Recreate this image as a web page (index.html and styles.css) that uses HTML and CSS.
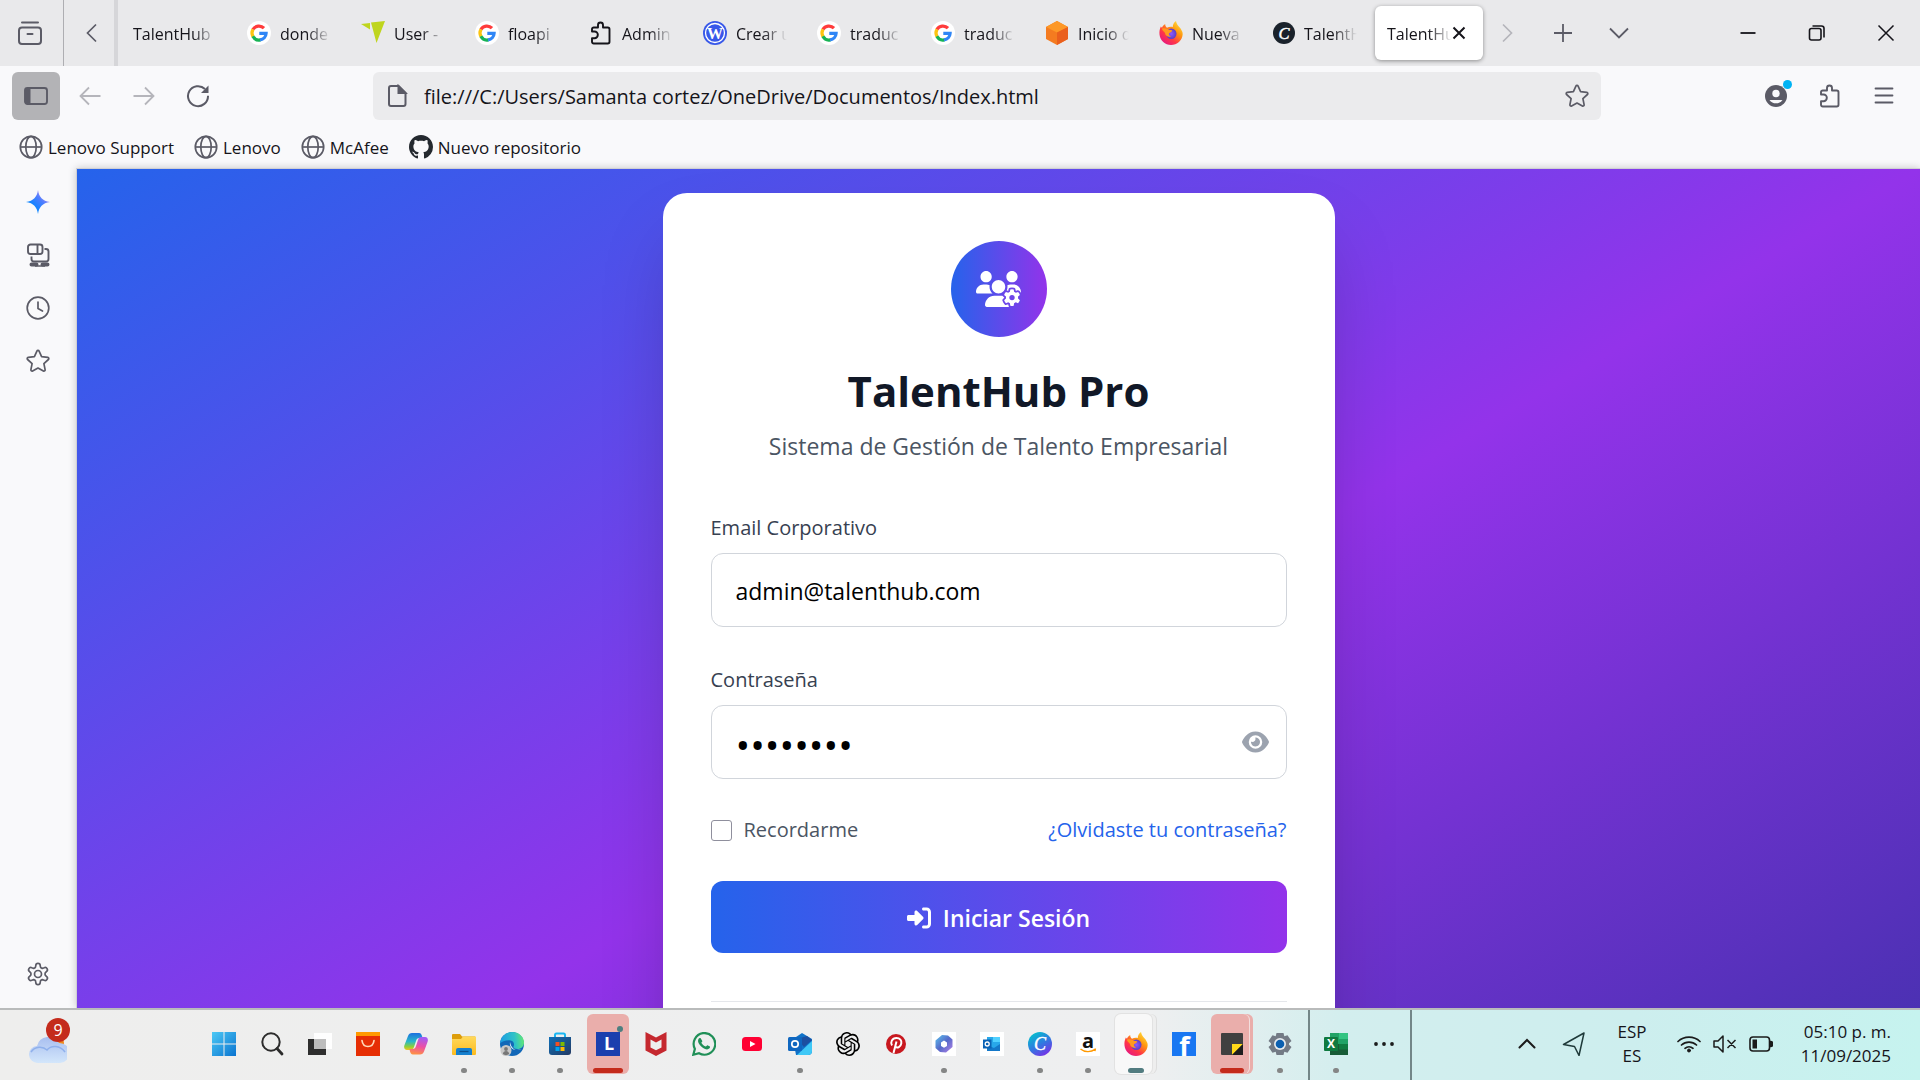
FILE: index.html
```html
<!DOCTYPE html>
<html lang="es">
<head>
<meta charset="utf-8">
<meta name="viewport" content="width=device-width, initial-scale=1">
<title>TalentHub Pro</title>
<link rel="stylesheet" href="styles.css">
</head>
<body>
<svg class="defs" aria-hidden="true">
  <defs>
    <linearGradient id="g-win" x1="0" y1="0" x2="1" y2="1"><stop offset="0" stop-color="#4cc9f5"/><stop offset="1" stop-color="#0a74d0"/></linearGradient>
    <linearGradient id="g-cloud" x1="0" y1="0" x2="0" y2="1"><stop offset="0" stop-color="#a9bff0"/><stop offset="1" stop-color="#d3e6fb"/></linearGradient>
    <linearGradient id="g-fox" x1="1" y1="0" x2="0.2" y2="1"><stop offset="0" stop-color="#fff44f"/><stop offset="0.4" stop-color="#ff980e"/><stop offset="0.7" stop-color="#ff3647"/><stop offset="1" stop-color="#e31587"/></linearGradient>
    <radialGradient id="g-foxcore"><stop offset="0" stop-color="#9059ff"/><stop offset="1" stop-color="#5b3fc4"/></radialGradient>
    <linearGradient id="g-canva" x1="0.2" y1="0" x2="0.8" y2="1"><stop offset="0" stop-color="#00c4cc"/><stop offset="0.5" stop-color="#2f7be0"/><stop offset="1" stop-color="#7d2ae8"/></linearGradient>
    <linearGradient id="g-edge" x1="0" y1="0.3" x2="1" y2="0.2"><stop offset="0" stop-color="#1b9de2"/><stop offset="0.6" stop-color="#2fc2c7"/><stop offset="1" stop-color="#66eb6e"/></linearGradient>
    <linearGradient id="g-spark" x1="0" y1="1" x2="1" y2="0"><stop offset="0.3" stop-color="#0a84ff"/><stop offset="0.6" stop-color="#4f7dff"/><stop offset="1" stop-color="#ff9ee0"/></linearGradient>
    <linearGradient id="g-cop1" x1="0" y1="0" x2="0" y2="1"><stop offset="0" stop-color="#1b6fe0"/><stop offset="0.5" stop-color="#29b8c8"/><stop offset="0.8" stop-color="#8ccf3a"/><stop offset="1" stop-color="#f3c421"/></linearGradient>
    <linearGradient id="g-cop2" x1="0.5" y1="0" x2="0.3" y2="1"><stop offset="0" stop-color="#a45cf4"/><stop offset="0.5" stop-color="#ec4fa6"/><stop offset="1" stop-color="#ff9340"/></linearGradient>
    <linearGradient id="g-store" x1="0" y1="0" x2="1" y2="1"><stop offset="0" stop-color="#0f6fb8"/><stop offset="1" stop-color="#243a63"/></linearGradient>
    <linearGradient id="g-folder" x1="0" y1="0" x2="0" y2="1"><stop offset="0" stop-color="#ffd95c"/><stop offset="1" stop-color="#fcbb1f"/></linearGradient>
    <linearGradient id="g-365" x1="0" y1="0" x2="1" y2="1"><stop offset="0" stop-color="#5cc3ee"/><stop offset="0.5" stop-color="#5569c9"/><stop offset="1" stop-color="#b583e8"/></linearGradient>
  </defs>
  <symbol id="i-google" viewBox="0 0 24 24">
    <circle cx="12" cy="12" r="12" fill="#fff"/>
    <g fill="none" stroke-width="3.2">
      <path d="M17 7.2A7 7 0 0 0 5.9 8.5" stroke="#ff3b3b"/>
      <path d="M6 8.4a7.2 7.2 0 0 0 0 7.2" stroke="#fcc411"/>
      <path d="M5.9 15.3A7 7 0 0 0 13.5 18.9" stroke="#17b355"/>
      <path d="M12.3 12.300h6.8a7 7 0 0 1-6 6.600" stroke="#2f86f6"/>
    </g>
  </symbol>
  <symbol id="i-ylogo" viewBox="0 0 24 24"><path d="M10 1.500 24 0 15.500 22zM0 3l9-1v6.500z" fill="#bfd51e"/></symbol>
  <symbol id="i-puzzle" viewBox="0 0 24 24"><path d="M3 10.500V8.200A1.700 1.700 0 0 1 4.700 6.500H9V4a2.500 2.500 0 0 1 5 0v2.500h4.800a1.700 1.700 0 0 1 1.700 1.700v12.600a1.700 1.700 0 0 1-1.700 1.700H4.700A1.700 1.700 0 0 1 3 20.800v-3.600h2.500a2.500 2.500 0 0 0 0-6.700z" fill="none" stroke="currentColor" stroke-width="1.900" stroke-linejoin="round"/></symbol>
  <symbol id="i-box" viewBox="0 0 24 24"><path d="M12 0l11 6v12l-11 6L1 18V6z" fill="#f47b20"/><path d="M12 0l11 6-11 5.500L1 6z" fill="#fd9827"/><path d="M23 6v12l-11 6V11.500z" fill="#ea5f1d"/></symbol>
  <symbol id="i-fox" viewBox="0 0 24 24">
    <path d="M22.500 9.200c-.5-1.500-1.600-2.800-2.500-3.500C18.500 4.400 17.500 2.500 17 0c-2.200 1.500-3.300 4-3.200 6-2-.3-4-.2-5.800.8C6.800 5.800 6 4.500 6.200 3 4.300 4.200 3.500 5.500 3 6.800L1.800 5.500C.7 8 .2 10.500.5 13.500 1.200 19.500 6 24 12 24s11.500-4.500 11.700-11c0-1.500-.4-2.800-1.200-3.800z" fill="url(#g-fox)"/>
    <circle cx="12.300" cy="12.800" r="5.200" fill="url(#g-foxcore)"/>
    <path d="M3 7.500c3-.8 5.500.2 7 1.200 1.500.2 2.800.3 3.300 1-.4 1.400-2.300 1.700-3.300 2.600-.5 1.300.3 2.700 2 3-2 1.200-4.800.3-5.700-2C6.500 11 3 10 3 7.500z" fill="#ff9a1f"/>
  </symbol>
  <symbol id="i-globe" viewBox="0 0 24 24"><g fill="none" stroke="currentColor" stroke-width="1.700"><circle cx="12" cy="12" r="10.700"/><ellipse cx="12" cy="12" rx="5.200" ry="10.700"/><path d="M1.500 12h21"/></g></symbol>
  <symbol id="i-github" viewBox="0 0 16 16"><path fill="#24292f" d="M8 0C3.580 0 0 3.580 0 8c0 3.540 2.290 6.530 5.470 7.590.4.070.55-.17.55-.38 0-.19-.01-.82-.01-1.490-2.010.37-2.530-.49-2.690-.94-.09-.23-.48-.94-.82-1.130-.28-.15-.68-.52-.01-.53.63-.01 1.080.58 1.230.82.72 1.210 1.870.87 2.330.66.070-.52.28-.87.51-1.070-1.780-.2-3.640-.89-3.640-3.950 0-.87.31-1.590.82-2.150-.08-.2-.36-1.020.08-2.120 0 0 .67-.21 2.200.82.640-.18 1.320-.27 2-.27s1.360.09 2 .27c1.530-1.040 2.200-.82 2.200-.82.440 1.100.16 1.920.08 2.120.51.56.82 1.270.82 2.150 0 3.070-1.870 3.750-3.650 3.950.29.25.54.73.54 1.480 0 1.070-.01 1.930-.01 2.200 0 .21.15.46.55.38A8.010 8.010 0 0 0 16 8c0-4.420-3.580-8-8-8z"/></symbol>
  <symbol id="i-star" viewBox="0 0 24 24"><path d="M10.900 2.100a1.200 1.200 0 0 1 2.200 0l2.500 5.600 6.200.7a1.200 1.200 0 0 1 .6 2.100l-4.500 4.100 1.200 6.100a1.200 1.200 0 0 1-1.700 1.300L12 19l-5.400 3a1.200 1.200 0 0 1-1.700-1.300l1.200-6.100-4.500-4.100a1.200 1.200 0 0 1 .6-2.100l6.200-.7z" fill="none" stroke="currentColor" stroke-width="1.700" stroke-linejoin="round"/></symbol>
  <symbol id="i-gear" viewBox="0 0 24 24"><path d="M9.800 3a2.200 2.200 0 0 1 4.400 0l.4 1.800 1.700 1 1.900-.6a2.200 2.200 0 0 1 2.200 3.800l-1.300 1.400v2l1.300 1.400a2.200 2.200 0 0 1-2.200 3.800l-1.900-.6-1.700 1-.4 1.800a2.200 2.200 0 0 1-4.400 0l-.4-1.800-1.700-1-1.900.6a2.200 2.200 0 0 1-2.200-3.800l1.300-1.400v-2L3.600 9a2.200 2.200 0 0 1 2.200-3.800l1.900.6 1.700-1z" transform="translate(0 .6)" fill="none" stroke="currentColor" stroke-width="1.700" stroke-linejoin="round"/><circle cx="12" cy="12" r="3.500" fill="none" stroke="currentColor" stroke-width="1.700"/></symbol>
</svg>

<div class="screen">
  <header class="tabs-bar">
    <button class="fx-view" aria-label="Vista de Firefox"><svg class="ic24" viewBox="0 0 24 24" fill="none" stroke="currentColor" stroke-width="2" stroke-linecap="round"><rect x="1" y="6.500" width="22" height="16.500" rx="3"/><path d="M4 1.500h16M9.500 13h5"/></svg></button>
    <button class="scroll-left" aria-label="Anterior"><svg class="ic24" viewBox="0 0 24 24" fill="none" stroke="currentColor" stroke-width="1.700"><path d="M16 3.500 7.500 12l8.500 8.500"/></svg></button>
    <nav class="tabs">
      <a class="tab" href="#"><span class="tab-text">TalentHub</span></a>
      <a class="tab" href="#"><svg class="ic24"><use href="#i-google"/></svg><span class="tab-text">donde</span></a>
      <a class="tab" href="#"><svg class="ic24"><use href="#i-ylogo"/></svg><span class="tab-text">User -</span></a>
      <a class="tab" href="#"><svg class="ic24"><use href="#i-google"/></svg><span class="tab-text">floapi</span></a>
      <a class="tab" href="#"><svg class="ic24"><use href="#i-puzzle"/></svg><span class="tab-text">Admin</span></a>
      <a class="tab" href="#"><svg class="ic24" viewBox="0 0 24 24"><circle cx="12" cy="12" r="12" fill="#3858e9"/><circle cx="12" cy="12" r="9.500" fill="none" stroke="#fff" stroke-width="1.300"/><text x="12" y="17.500" text-anchor="middle" font-family="Liberation Serif, serif" font-weight="700" font-size="16" fill="#fff">W</text></svg><span class="tab-text">Crear u</span></a>
      <a class="tab" href="#"><svg class="ic24"><use href="#i-google"/></svg><span class="tab-text">traduc</span></a>
      <a class="tab" href="#"><svg class="ic24"><use href="#i-google"/></svg><span class="tab-text">traduc</span></a>
      <a class="tab" href="#"><svg class="ic24"><use href="#i-box"/></svg><span class="tab-text">Inicio d</span></a>
      <a class="tab" href="#"><svg class="ic24"><use href="#i-fox"/></svg><span class="tab-text">Nueva</span></a>
      <a class="tab" href="#"><svg class="ic22" viewBox="0 0 24 24"><circle cx="12" cy="12" r="12" fill="#1a222b"/><text x="12" y="18" text-anchor="middle" font-family="Liberation Serif, serif" font-style="italic" font-size="18" fill="#fff" stroke="#fff" stroke-width=".5">C</text></svg><span class="tab-text">TalentH</span></a>
      <a class="tab tab-active" href="#"><span class="tab-text">TalentHub</span><svg class="ic14" viewBox="0 0 14 14" stroke="#15141a" stroke-width="2"><path d="M1.500 1.500l11 11M12.500 1.500l-11 11"/></svg></a>
    </nav>
    <div class="tab-tools">
      <button class="dim" aria-label="Siguiente"><svg class="ic24" viewBox="0 0 24 24" fill="none" stroke="currentColor" stroke-width="1.700"><path d="M8 3.500l8.500 8.500L8 20.500"/></svg></button>
      <button aria-label="Nueva pestaña"><svg class="ic24" viewBox="0 0 24 24" fill="none" stroke="currentColor" stroke-width="1.800"><path d="M12 3v18M3 12h18"/></svg></button>
      <button aria-label="Lista de pestañas"><svg class="ic24" viewBox="0 0 24 24" fill="none" stroke="currentColor" stroke-width="1.800"><path d="M3 7.500l9 9 9-9"/></svg></button>
    </div>
    <div class="window-tools">
      <button aria-label="Minimizar"><svg class="ic24" viewBox="0 0 24 24" stroke="currentColor" stroke-width="1.800"><path d="M4.500 12h15"/></svg></button>
      <button aria-label="Restaurar"><svg class="ic24" viewBox="0 0 24 24" fill="none" stroke="currentColor" stroke-width="1.600"><rect x="4.500" y="7.500" width="11.500" height="11.500" rx="2"/><path d="M7.500 5h9a2.500 2.500 0 0 1 2.500 2.500v9"/></svg></button>
      <button aria-label="Cerrar"><svg class="ic24" viewBox="0 0 24 24" stroke="currentColor" stroke-width="1.500"><path d="M4.500 4.500l15 15M19.500 4.500l-15 15"/></svg></button>
    </div>
  </header>

  <div class="toolbar">
    <div class="nav-tools">
      <button class="pressed" aria-label="Barra lateral"><svg class="ic24" viewBox="0 0 24 24"><rect x="1" y="4" width="22" height="16" rx="2.500" fill="none" stroke="currentColor" stroke-width="1.900"/><path d="M1 5h5.500v14H1z" fill="currentColor"/></svg></button>
      <button class="dim" aria-label="Atrás"><svg class="ic24" viewBox="0 0 24 24" fill="none" stroke="currentColor" stroke-width="1.800"><path d="M22.500 12H2.500M11 3.500 2.500 12l8.500 8.500"/></svg></button>
      <button class="dim" aria-label="Adelante"><svg class="ic24" viewBox="0 0 24 24" fill="none" stroke="currentColor" stroke-width="1.800"><path d="M1.500 12h20M13 3.500l8.500 8.500-8.500 8.500"/></svg></button>
      <button aria-label="Recargar"><svg class="ic24" viewBox="0 0 24 24" fill="none" stroke="currentColor" stroke-width="2"><path d="M22 11.800A10 10 0 1 1 19 5"/><path d="M22.500 1.500v7.500H15z" fill="currentColor" stroke="none"/></svg></button>
    </div>
    <div class="urlbar">
      <svg class="ic24" viewBox="0 0 24 24" fill="none" stroke="currentColor" stroke-width="2"><path d="M6 2h7.500L20.500 9v11a2 2 0 0 1-2 2H6a2 2 0 0 1-2-2V4a2 2 0 0 1 2-2z"/><path d="M13.500 2v7h7z" fill="currentColor"/></svg>
      <input class="url" type="text" aria-label="Dirección" value="file:///C:/Users/Samanta cortez/OneDrive/Documentos/Index.html">
      <button aria-label="Añadir marcador"><svg class="ic24"><use href="#i-star"/></svg></button>
    </div>
    <div class="right-tools">
      <button class="account" aria-label="Cuenta"><svg class="ic24" viewBox="0 0 24 24"><circle cx="12" cy="12" r="11" fill="currentColor"/><circle cx="12" cy="9.500" r="3.700" fill="#f9f9fb"/><path d="M5.500 16h13a8 8 0 0 1-13 0z" fill="#f9f9fb"/></svg><span class="account-dot"></span></button>
      <button aria-label="Extensiones"><svg class="ic24"><use href="#i-puzzle"/></svg></button>
      <button aria-label="Menú"><svg class="ic24" viewBox="0 0 24 24" stroke="currentColor" stroke-width="1.800" stroke-linecap="round"><path d="M3.500 4.500h17M3.500 11.500h17M3.500 18.500h17"/></svg></button>
    </div>
  </div>

  <nav class="bookmarks">
    <a href="#"><svg class="ic24"><use href="#i-globe"/></svg>Lenovo Support</a>
    <a href="#"><svg class="ic24"><use href="#i-globe"/></svg>Lenovo</a>
    <a href="#"><svg class="ic24"><use href="#i-globe"/></svg>McAfee</a>
    <a href="#"><svg class="ic24"><use href="#i-github"/></svg>Nuevo repositorio</a>
  </nav>

  <div class="content">
    <aside class="sidebar">
      <button aria-label="Chatbot"><svg class="ic24" viewBox="0 0 24 24"><path d="M12 0c1 7 4.500 11 12 12-7.500 1-11 5-12 12-1-7-4.500-11-12-12 7.500-1 11-5 12-12z" fill="url(#g-spark)"/></svg></button>
      <button aria-label="Pestañas de otros dispositivos"><svg class="ic24" viewBox="0 0 24 24" fill="none" stroke="currentColor" stroke-width="1.900"><rect x="2" y="1.500" width="14.500" height="9.500" rx="2.500"/><path d="M11.500 2v9M18.500 6H20a2.500 2.500 0 0 1 2.500 2.500V16a2.500 2.500 0 0 1-2.500 2.500H8A2.500 2.500 0 0 1 5.500 16v-2.500"/><path d="M5.500 21.500h5M16.500 21.500h5" stroke-width="4" stroke-linecap="round"/><path d="M9 23h10" stroke-width="1.500"/></svg></button>
      <button aria-label="Historial"><svg class="ic24" viewBox="0 0 24 24" fill="none" stroke="currentColor" stroke-width="1.700" stroke-linecap="round"><circle cx="12" cy="12" r="10.800"/><path d="M12 6v6.500l4.500 2.500"/></svg></button>
      <button aria-label="Marcadores"><svg class="ic24"><use href="#i-star"/></svg></button>
      <button class="settings" aria-label="Configuración"><svg class="ic24"><use href="#i-gear"/></svg></button>
    </aside>
    <main class="viewport">
      <div class="page">
        <form class="card">
          <div class="brand">
            <svg viewBox="0 0 640 512" fill="#fff"><path d="M144 160c-44.200 0-80-35.800-80-80S99.800 0 144 0s80 35.800 80 80s-35.800 80-80 80zm368 0c-44.200 0-80-35.800-80-80s35.800-80 80-80s80 35.800 80 80s-35.800 80-80 80zM0 298.700C0 239.800 47.800 192 106.700 192h42.700c15.900 0 31 3.500 44.600 9.700c-1.300 7.200-1.900 14.700-1.900 22.300c0 38.200 16.800 72.500 43.300 96H21.300C9.600 320 0 310.400 0 298.700zM405.300 320c26.600-23.500 42.700-57.800 42.700-96c0-7.600-.7-15-1.900-22.300c13.600-6.300 28.700-9.700 44.600-9.700h42.700C592.200 192 640 239.800 640 298.700c0 11.800-9.600 21.300-21.300 21.300zM416 224c0 53-43 96-96 96s-96-43-96-96s43-96 96-96s96 43 96 96zM128 485.300C128 411.700 187.700 352 261.300 352H378.700C452.300 352 512 411.700 512 485.300c0 14.700-11.900 26.700-26.700 26.700H154.700c-14.700 0-26.700-11.900-26.700-26.700z"/><path stroke="#6d45e9" stroke-width="50" paint-order="stroke" stroke-linejoin="round" d="M488 262q24-6 48 0l6 34 24 14 32-12q18 18 26 42l-26 24v28l26 24q-8 24-26 42l-32-12-24 14-6 34q-24 6-48 0l-6-34-24-14-32 12q-18-18-26-42l26-24v-28l-26-24q8-24 26-42l32 12 24-14z"/><circle cx="512" cy="378" r="38" fill="#6d45e9"/></svg>
          </div>
          <h1>TalentHub Pro</h1>
          <p class="subtitle">Sistema de Gestión de Talento Empresarial</p>
          <div class="field">
            <label for="email">Email Corporativo</label>
            <input class="box" id="email" type="email" value="admin@talenthub.com">
          </div>
          <div class="field">
            <label for="password">Contraseña</label>
            <div class="password-wrap">
              <input class="box password" id="password" type="password" value="12345678">
              <button class="eye" type="button" aria-label="Mostrar contraseña"><svg viewBox="0 0 576 512" fill="currentColor"><path d="M288 32c-80.800 0-145.500 36.800-192.600 80.600C48.600 156 17.300 208 2.500 243.700c-3.300 7.900-3.300 16.700 0 24.600C17.300 304 48.600 356 95.400 399.400C142.500 443.200 207.200 480 288 480s145.500-36.800 192.600-80.600c46.800-43.500 78.100-95.400 93-131.100c3.300-7.900 3.300-16.700 0-24.600c-14.900-35.700-46.200-87.700-93-131.100C433.500 68.800 368.800 32 288 32zM144 256a144 144 0 1 1 288 0 144 144 0 1 1 -288 0zm144-64c0 35.300-28.700 64-64 64c-7.100 0-13.900-1.200-20.300-3.300c-5.500-1.800-11.900 1.600-11.700 7.400c.3 6.900 1.300 13.800 3.200 20.700c13.700 51.200 66.400 81.600 117.600 67.900s81.600-66.400 67.900-117.600c-11.100-41.500-47.800-69.400-88.600-71.100c-5.800-.2-9.200 6.100-7.400 11.700c2.100 6.400 3.300 13.200 3.300 20.300z"/></svg></button>
            </div>
          </div>
          <div class="options">
            <label class="remember"><input type="checkbox">Recordarme</label>
            <a href="#">¿Olvidaste tu contraseña?</a>
          </div>
          <button class="submit" type="submit"><svg class="ic24" viewBox="0 0 512 512" fill="currentColor"><path d="M217.900 105.900L340.700 228.700c7.200 7.200 11.300 17.100 11.300 27.300s-4.100 20.100-11.300 27.300L217.900 406.100c-6.400 6.400-15 9.900-24 9.900c-18.700 0-33.900-15.200-33.900-33.900l0-62.100L32 320c-17.700 0-32-14.300-32-32l0-64c0-17.700 14.300-32 32-32l128 0 0-62.100c0-18.700 15.200-33.900 33.900-33.900c9 0 17.600 3.600 24 9.900zM352 416l64 0c17.700 0 32-14.300 32-32l0-256c0-17.700-14.300-32-32-32l-64 0c-17.700 0-32-14.300-32-32s14.300-32 32-32l64 0c53 0 96 43 96 96l0 256c0 53-43 96-96 96l-64 0c-17.700 0-32-14.300-32-32s14.300-32 32-32z"/></svg>Iniciar Sesión</button>
          <hr>
        </form>
      </div>
    </main>
  </div>

  <footer class="taskbar">
    <button class="weather" aria-label="El tiempo"><svg viewBox="0 0 38 38"><circle cx="27" cy="17" r="8" fill="#f08a1c"/><path d="M9 37a8.500 8.500 0 0 1-1-17 12 12 0 0 1 22-3 10 10 0 0 1 1 20z" fill="url(#g-cloud)"/><path d="M2 26c4-6 12-6 16-2 4-5 13-5 18 2" fill="none" stroke="#8fb0ec" stroke-width="1.500"/></svg><span class="badge">9</span></button>
    <div class="apps">
      <button class="app" aria-label="Inicio"><svg class="ic24" viewBox="0 0 24 24" fill="url(#g-win)"><path d="M0 0h11.500v11.500H0zM12.500 0H24v11.500H12.500zM0 12.500h11.500V24H0zM12.500 12.500H24V24H12.500z"/></svg></button>
      <button class="app" aria-label="Buscar"><svg class="ic24" viewBox="0 0 24 24" fill="none" stroke="#2c2c2c"><circle cx="11" cy="10" r="8.700" stroke-width="2"/><path d="M17 16.500l5 5.500" stroke-width="2.800" stroke-linecap="round"/></svg></button>
      <button class="app" aria-label="Vista de tareas"><svg class="ic24" viewBox="0 0 24 24"><path d="M0 7h18v16H0z" fill="#2e2e2e"/><path d="M6 1h18v16H6z" fill="#fff" opacity=".9"/><path d="M6 7h12v10H6z" fill="#bdbdbd"/></svg></button>
      <button class="app" aria-label="AliExpress"><svg class="ic24" viewBox="0 0 24 24"><path d="M0 0h24v24H0z" fill="#e62e04"/><path d="M0 0h24v4H0z" fill="#ff9900"/><path d="M6 8.500c1 8 11 8 12 0" fill="none" stroke="#ffd9b8" stroke-width="1.700" stroke-linecap="round"/></svg></button>
      <button class="app" aria-label="Copilot"><svg class="ic24" viewBox="0 0 24 24"><path d="M8 1h7c2 0 2.500 1.500 3 3l.5 2h-3c-2 0-3 1-3.500 3l-2 6c-.6 2-1.500 3-3.500 3H3c-2.500 0-3.500-2-2.500-5L4 4c.7-2 2-3 4-3z" fill="url(#g-cop1)"/><path d="M16 22.500H9c-2 0-2.500-1.500-3-3L5.500 17h3c2 0 3-1 3.500-3l2-6c.6-2 1.500-3 3.500-3H21c2.500 0 3.500 2 2.500 5L20 19.500c-.7 2-2 3-4 3z" fill="url(#g-cop2)"/></svg></button>
      <button class="app running" aria-label="Explorador de archivos"><svg class="ic24" viewBox="0 0 24 24"><path d="M0 3a1 1 0 0 1 1-1h7l2 2.500h13V10H0z" fill="#dd9d0b"/><path d="M0 7h9l2-2.500h13V22a1 1 0 0 1-1 1H1a1 1 0 0 1-1-1z" fill="url(#g-folder)"/><path d="M4 23v-5a2 2 0 0 1 2-2h12a2 2 0 0 1 2 2v5z" fill="#1580cf"/><path d="M7.500 19.500h9" stroke="#0b4f8e" stroke-width="1.300"/></svg></button>
      <button class="app running" aria-label="Edge"><svg class="ic24" viewBox="0 0 24 24"><circle cx="12" cy="12" r="12" fill="#1268b8"/><path d="M0 11.500C.5 5 5.500 0 12 0c7 0 12 5 12 10.500 0 4-3 6.500-6.500 6.500-3 0-4.500-1-4-2.500 1.500-2.500 0-6-4-6.200C5 8.200 1.500 10 0 11.500z" fill="url(#g-edge)"/><path d="M10 10c-1 6 4 10 12 7-2.500 1.300-10 3-12-7z" fill="#e8f4fb"/><circle cx="6" cy="18.500" r="5.500" fill="#c8c8c8"/><circle cx="6" cy="17" r="1.900" fill="#777"/><path d="M2.800 22c.5-4 6-4 6.400 0a5.500 5.500 0 0 1-6.400 0z" fill="#777"/></svg></button>
      <button class="app running" aria-label="Microsoft Store"><svg class="ic24" viewBox="0 0 24 24"><path d="M7 6V3a1.500 1.500 0 0 1 1.500-1.500h7A1.500 1.500 0 0 1 17 3v3" fill="none" stroke="#18b6f2" stroke-width="2"/><path d="M1 5h22v15a3 3 0 0 1-3 3H4a3 3 0 0 1-3-3z" fill="url(#g-store)"/><path d="M7.500 10h4v4h-4z" fill="#f25022"/><path d="M12.500 10h4v4h-4z" fill="#7fba00"/><path d="M7.500 15h4v4h-4z" fill="#00a4ef"/><path d="M12.500 15h4v4h-4z" fill="#ffb900"/></svg></button>
      <button class="app alert" aria-label="Lenovo Vantage"><svg class="ic24" viewBox="0 0 24 24"><path d="M0 0h24v24H0z" fill="#1b3fae"/><text x="13" y="18" text-anchor="middle" font-family="Open Sans, sans-serif" font-weight="700" font-size="18" fill="#fff">L</text></svg><span class="app-dot"></span></button>
      <button class="app" aria-label="McAfee"><svg class="ic24" viewBox="0 0 24 24"><path d="M1.500 0L12 5.500 22.500 0v18.500L12 24 1.500 18.500zM6.500 7.500v8L12 18.300l5.500-2.800v-8L12 10.500z" fill="#c5282f" fill-rule="evenodd"/></svg></button>
      <button class="app" aria-label="WhatsApp"><svg class="ic24" viewBox="0 0 24 24"><path d="M1.300 22.700l1.600-5.800A10.800 10.800 0 1 1 7 21.200z" fill="none" stroke="#1f8f57" stroke-width="2.200"/><path d="M8.800 6.500c-.5-.9-1.800-.5-2.300.4-1.300 2.400.5 5.600 3.300 8 2.700 2.300 5.700 3.300 7.400 1.700.8-.7 1-1.800.7-2.100l-2.400-1.200c-.7-.2-1 1.300-1.800 1.300-1.500-.3-4-2.600-4.300-3.900.1-.6 1.100-1 .9-1.700z" fill="#1f8f57"/></svg></button>
      <button class="app" aria-label="YouTube"><svg class="ic24" viewBox="0 0 24 24"><rect x="2" y="5" width="20" height="14" rx="3.500" fill="#ff0033"/><path d="M10 9l5.500 3-5.500 3z" fill="#fff"/></svg></button>
      <button class="app running" aria-label="Outlook"><svg class="ic24" viewBox="0 0 24 24"><path d="M5 7L14 1l10 6v12a4 4 0 0 1-4 4H8z" fill="#1072c8"/><path d="M9 7l10-3 5 4-8 7z" fill="#1c4fa0"/><path d="M24 9v10a4 4 0 0 1-4 4H9z" fill="#3fc8f6"/><rect y="5" width="14" height="14" rx="1.500" fill="#0f67c0"/><circle cx="7" cy="12" r="3.200" fill="none" stroke="#fff" stroke-width="1.700"/></svg></button>
      <button class="app" aria-label="ChatGPT"><svg class="ic24" viewBox="0 0 24 24"><path d="M22.282 9.821a5.985 5.985 0 0 0-.516-4.911 6.046 6.046 0 0 0-6.510-2.900A6.065 6.065 0 0 0 4.981 4.182a5.985 5.985 0 0 0-3.998 2.900 6.046 6.046 0 0 0 .743 7.097 5.980 5.980 0 0 0 .511 4.911 6.051 6.051 0 0 0 6.515 2.900A5.985 5.985 0 0 0 13.260 24a6.056 6.056 0 0 0 5.772-4.206 5.989 5.989 0 0 0 3.998-2.900 6.056 6.056 0 0 0-.748-7.073zm-9.022 12.608a4.476 4.476 0 0 1-2.876-1.041l.142-.080 4.778-2.758a.795.795 0 0 0 .393-.681v-6.737l2.020 1.169a.071.071 0 0 1 .038.052v5.583a4.504 4.504 0 0 1-4.495 4.494zm-9.661-4.125a4.471 4.471 0 0 1-.535-3.014l.142.085 4.783 2.758a.771.771 0 0 0 .781 0l5.843-3.369v2.332a.080.080 0 0 1-.033.062L9.740 19.950a4.499 4.499 0 0 1-6.141-1.646zM2.341 7.896a4.485 4.485 0 0 1 2.366-1.973V11.600a.766.766 0 0 0 .388.677l5.814 3.354-2.020 1.169a.076.076 0 0 1-.071 0l-4.830-2.787A4.504 4.504 0 0 1 2.341 7.872zm16.596 3.856L13.104 8.364 15.119 7.200a.076.076 0 0 1 .071 0l4.830 2.791a4.494 4.494 0 0 1-.677 8.104v-5.677a.790.790 0 0 0-.407-.667zm2.011-3.023l-.142-.085-4.774-2.782a.776.776 0 0 0-.785 0L9.409 9.230V6.897a.066.066 0 0 1 .028-.062l4.830-2.787a4.499 4.499 0 0 1 6.680 4.660zM8.307 12.863l-2.020-1.164a.080.080 0 0 1-.038-.057V6.074a4.499 4.499 0 0 1 7.376-3.454l-.142.081L8.704 5.459a.795.795 0 0 0-.393.681zm1.098-2.365l2.602-1.500 2.607 1.500v2.999l-2.597 1.500-2.607-1.500z"/></svg></button>
      <button class="app" aria-label="Pinterest"><svg class="ic24" viewBox="0 0 24 24"><circle cx="12" cy="12" r="10" fill="#c8181f"/><path d="M9.500 21l3-11.500M8 13.500c-2-3 0-7.500 4.500-7.500 3.500 0 5.300 2.400 4.800 5.300-.6 3.600-4 5.400-6 3.200" fill="none" stroke="#fff" stroke-width="2"/></svg></button>
      <button class="app running" aria-label="Microsoft 365"><svg class="ic24" viewBox="0 0 24 24"><path d="M0 0h24v24H0z" fill="#fff"/><path d="M10 3l6 .5 4.500 4V15L14 20.500 8 20l-4.500-4V8.500zm2 5.500L9 10.500V14l3 1.800 3-1.800v-3.500z" fill="url(#g-365)" fill-rule="evenodd"/></svg></button>
      <button class="app" aria-label="Outlook Web"><svg class="ic24" viewBox="0 0 24 24"><path d="M0 0h24v24H0z" fill="#fff"/><path d="M7 5h13v14H7z" fill="#28a8ea"/><path d="M13 5h7v5h-7z" fill="#50d0ff"/><path d="M7 13l7 3 6-4v7H7z" fill="#1478c9"/><path d="M3 7.500h8.500v9H3z" fill="#0a62b5"/><circle cx="7.200" cy="12" r="2" fill="none" stroke="#fff" stroke-width="1.300"/></svg></button>
      <button class="app running" aria-label="Canva"><svg class="ic24" viewBox="0 0 24 24"><circle cx="12" cy="12" r="12" fill="url(#g-canva)"/><text x="12" y="18" text-anchor="middle" font-family="Liberation Serif, serif" font-style="italic" font-size="18" fill="#fff" stroke="#fff" stroke-width=".4">C</text></svg></button>
      <button class="app running" aria-label="Amazon"><svg class="ic24" viewBox="0 0 24 24"><path d="M0 0h24v24H0z" fill="#fff"/><text x="12" y="16" text-anchor="middle" font-family="Open Sans, sans-serif" font-weight="700" font-size="20" fill="#111">a</text><path d="M4.500 17c4 3.400 10.500 3.400 14.500.4M19.500 16.500l-.6 2.700" fill="none" stroke="#f90" stroke-width="1.400"/></svg></button>
      <button class="app current" aria-label="Firefox"><svg class="ic24"><use href="#i-fox"/></svg></button>
      <button class="app" aria-label="Facebook"><svg class="ic24" viewBox="0 0 24 24"><path d="M0 0h24v24H0z" fill="#1877f2"/><text x="12.500" y="24" text-anchor="middle" font-family="Open Sans, sans-serif" font-weight="700" font-size="27" fill="#fff">f</text></svg></button>
      <button class="app alert stacked" aria-label="Notas rápidas"><svg class="ic24" viewBox="0 0 24 24"><rect x="1" y="1" width="22" height="22" rx="1" fill="#404040"/><path d="M12 12h11L12 23z" fill="#ffd91a"/><path d="M23 12v11H12z" fill="#1d1d1d"/></svg></button>
      <button class="app running" aria-label="Ajustes"><svg class="ic24" viewBox="0 0 24 24"><path d="M8.500 1h7l.8 3.300 3.200-1L23.500 9 21 11.300v1.400l2.500 2.300-4 5.700-3.200-1-.8 3.300h-7l-.8-3.300-3.200 1L.5 15 3 12.700v-1.400L.5 9l4-5.700 3.200 1z" fill="#737a85"/><circle cx="12" cy="12" r="6" fill="#e6eaee"/><circle cx="12" cy="12" r="4.300" fill="#0b5fb0"/></svg></button>
    </div>
    <div class="apps overflow">
      <button class="app running" aria-label="Excel"><svg class="ic24" viewBox="0 0 24 24"><path d="M6 1h18v22H6z" fill="#21a366"/><path d="M15 1h9v6h-9z" fill="#33c481"/><path d="M6 12h9v11H6z" fill="#185c37"/><path d="M15 12h9v6h-9z" fill="#107c41"/><path d="M15 17.500h9V23h-9z" fill="#185c37"/><rect y="5" width="14" height="14" rx="1" fill="#0f7a40"/><text x="7" y="16" text-anchor="middle" font-family="Open Sans, sans-serif" font-weight="700" font-size="12" fill="#fff">X</text></svg></button>
      <button class="app" aria-label="Más"><svg class="ic24" viewBox="0 0 24 24" fill="#1b1b1b"><circle cx="4" cy="12" r="1.900"/><circle cx="12" cy="12" r="1.900"/><circle cx="20" cy="12" r="1.900"/></svg></button>
    </div>
    <div class="tray">
      <button aria-label="Iconos ocultos"><svg class="ic24" viewBox="0 0 24 24" fill="none" stroke="#1b1b1b" stroke-width="2" stroke-linecap="round"><path d="M4.500 15.500L12 8l7.500 7.500"/></svg></button>
      <button aria-label="Ubicación"><svg class="ic24" viewBox="0 0 24 24" fill="none" stroke="#1f3a3a" stroke-width="1.500" stroke-linejoin="round"><path d="M22 1L1.500 12.500l11 2L17 23.500z"/></svg></button>
      <button class="lang">ESP<br>ES</button>
      <button class="status" aria-label="Red, volumen y batería">
        <svg class="ic24" viewBox="0 0 24 24" fill="none" stroke="#1b1b1b" stroke-width="1.700" stroke-linecap="round"><path d="M1 9.500a16 16 0 0 1 22 0M4.500 13a11 11 0 0 1 15 0M8 16.300a6 6 0 0 1 8 0"/><circle cx="12" cy="18.500" r="1.500" fill="#1b1b1b" stroke-width="1"/></svg>
        <svg class="ic24" viewBox="0 0 24 24" fill="none" stroke="#1b1b1b" stroke-width="1.500" stroke-linejoin="round"><path d="M1 9h4l5-5v16l-5-5H1zM14.500 8l8 8M22.500 8l-8 8"/></svg>
        <svg class="ic24" viewBox="0 0 24 24"><rect x="1" y="5" width="19.500" height="14" rx="3" fill="none" stroke="#1b1b1b" stroke-width="1.600"/><rect x="3.500" y="7.500" width="4.500" height="9" fill="#1b1b1b"/><path d="M21.500 9.500a2.500 2.500 0 0 1 0 5z" fill="#1b1b1b" stroke="#1b1b1b" stroke-width="1.500"/></svg>
      </button>
      <button class="clock">05:10 p. m.<br>11/09/2025</button>
    </div>
  </footer>
</div>
</body>
</html>
```
FILE: styles.css
```css
* { box-sizing: border-box; }
body {
  margin: 0;
  font-family: "Open Sans", "Noto Sans", sans-serif;
  font-size: 16px;
  color: #15141a;
}
button {
  display: inline-flex;
  align-items: center;
  justify-content: center;
  padding: 0;
  border: 0;
  background: none;
  color: inherit;
  font: inherit;
}
a { color: inherit; text-decoration: none; }
svg { display: block; flex: none; }
.defs { position: absolute; width: 0; height: 0; }
.ic24 { width: 24px; height: 24px; }
.ic22 { width: 22px; height: 22px; }
.ic14 { width: 14px; height: 14px; }

.screen {
  display: flex;
  flex-direction: column;
  height: 100vh;
  overflow: hidden;
  background: #f9f9fb;
}

/* Tab strip */
.tabs-bar {
  display: flex;
  flex: none;
  height: 66px;
  background: #e9e9eb;
  color: #5b5b66;
}
.fx-view { width: 64px; padding-right: 3px; border-right: 1px solid #aeaeb2; }
.scroll-left { width: 54px; padding-left: 6px; border-right: 4px solid #d6d6d9; }
.tabs { display: flex; gap: 6px; padding: 6px 3px; color: #15141a; }
.tab {
  display: flex;
  align-items: center;
  gap: 9px;
  width: 108px;
  padding: 0 12px;
  border-radius: 6px;
}
.tab-text {
  flex: 1;
  padding-top: 1px;
  overflow: hidden;
  white-space: nowrap;
  mask-image: linear-gradient(to left, transparent, #000 24px);
}
.tab-active {
  gap: 0;
  padding-right: 17px;
  background: #fff;
  box-shadow: 0 1px 4px rgba(0, 0, 0, 0.4);
}
.tab-tools { display: flex; gap: 14px; }
.tab-tools button { width: 42px; }
.window-tools { display: flex; margin-left: auto; color: #15141a; }
.window-tools button { width: 69px; }
.dim { color: #b5b5bb; }

/* Navigation toolbar */
.toolbar {
  display: flex;
  flex: none;
  align-items: center;
  height: 60px;
  padding: 0 12px;
  color: #5b5b66;
}
.nav-tools { display: flex; gap: 6px; }
.nav-tools button, .right-tools button { width: 48px; height: 48px; }
.nav-tools .pressed { border-radius: 6px; background: #b3b3b6; }
.urlbar {
  display: flex;
  flex: 1;
  align-items: center;
  gap: 15px;
  height: 48px;
  margin: 0 151px;
  padding: 0 12px;
  border-radius: 6px;
  background: #ebebed;
}
.url {
  flex: 1;
  padding: 0;
  border: 0;
  background: none;
  color: #15141a;
  font: inherit;
  font-size: 20px;
}
.right-tools { display: flex; gap: 6px; }
.account { position: relative; }
.account-dot {
  position: absolute;
  top: 8px;
  right: 8px;
  width: 9px;
  height: 9px;
  border-radius: 50%;
  background: #00b3f4;
}

/* Bookmarks */
.bookmarks {
  display: flex;
  flex: none;
  align-items: center;
  gap: 20px;
  height: 42px;
  padding: 0 19px;
  font-size: 17px;
}
.bookmarks a { display: flex; align-items: center; gap: 5px; }
.bookmarks svg { color: #5b5b66; }

/* Sidebar and page */
.content { display: flex; flex: 1; min-height: 0; }
.sidebar {
  display: flex;
  flex: none;
  flex-direction: column;
  gap: 5px;
  width: 76px;
  padding: 10px 14px;
  color: #5b5b66;
}
.sidebar button { height: 48px; }
.sidebar .settings { margin-top: auto; }
.viewport {
  flex: 1;
  overflow: hidden;
  border-top: 1px solid #cfcfd4;
  border-left: 1px solid #cfcfd4;
  box-shadow: 0 0 8px rgba(0, 0, 0, 0.2);
}
.page {
  display: flex;
  justify-content: center;
  min-height: 1085px;
  padding: 24px;
  background: linear-gradient(to bottom right, #2563eb, #9333ea, #3730a3);
}
.card {
  width: 672px;
  padding: 48px;
  border-radius: 24px;
  background: #fff;
  box-shadow: 0 38px 76px -18px rgba(0, 0, 0, 0.25);
}
.brand {
  display: flex;
  align-items: center;
  justify-content: center;
  width: 96px;
  height: 96px;
  margin: 0 auto 24px;
  border-radius: 50%;
  background: linear-gradient(to right, #2563eb, #9333ea);
}
.brand svg { width: 45px; height: 36px; }
h1 {
  margin: 0 0 6px;
  color: #111827;
  font-size: 42px;
  line-height: 60px;
  text-align: center;
}
.subtitle {
  margin: 0 0 46px;
  color: #4b5563;
  font-size: 23px;
  line-height: 38px;
  text-align: center;
}
.field { margin-bottom: 36px; }
.field label {
  display: block;
  margin-bottom: 9px;
  color: #374151;
  font-size: 20px;
  line-height: 33px;
}
.box {
  display: block;
  width: 100%;
  height: 74px;
  padding: 2px 24px 0;
  border: 1px solid #d1d5db;
  border-radius: 12px;
  background: #fff;
  color: #000;
  font: inherit;
  font-size: 23px;
}
.password-wrap { position: relative; }
.password { padding-top: 4px; font-size: 39px; }
.eye {
  position: absolute;
  top: 0;
  right: 18px;
  height: 74px;
  color: #9ca3af;
}
.eye svg { width: 27px; height: 24px; }
.options {
  display: flex;
  align-items: center;
  justify-content: space-between;
  margin-bottom: 36px;
  font-size: 20px;
  line-height: 30px;
}
.options a { color: #2563eb; }
.remember { display: flex; align-items: center; gap: 12px; color: #4b5563; }
.remember input {
  width: 21px;
  height: 21px;
  margin: 0;
  border: 1px solid #8f8f9d;
  border-radius: 3px;
  background: #fff;
  appearance: none;
}
.submit {
  display: flex;
  gap: 12px;
  width: 100%;
  height: 72px;
  padding-top: 2px;
  border-radius: 12px;
  background: linear-gradient(to right, #2563eb, #9333ea);
  color: #fff;
  font-size: 23px;
  font-weight: 600;
}
hr { margin: 48px 0 0; border: 0; border-top: 1px solid #e5e7eb; }

/* Taskbar */
.taskbar {
  position: relative;
  display: flex;
  flex: none;
  height: 72px;
  border-top: 2px solid #b9bbbb;
  background: linear-gradient(to right, #eeeeed 0%, #eeeff0 60%, #d3eeee 70%, #cdeeee 85%, #c6f3ef 100%);
}
.weather { position: relative; width: 96px; margin-right: 104px; }
.weather svg { width: 38px; height: 38px; }
.badge {
  position: absolute;
  top: 8px;
  left: 46px;
  width: 24px;
  height: 24px;
  border-radius: 50%;
  background: #c42b1c;
  color: #fff;
  line-height: 24px;
}
.apps { display: flex; }
.app { position: relative; width: 48px; height: 68px; }
.app svg { position: relative; }
.running::after, .current::after, .alert::after {
  content: "";
  position: absolute;
  bottom: 5px;
  left: 21px;
  width: 6px;
  height: 5px;
  border-radius: 3px;
  background: #858686;
}
.current::before, .alert::before {
  content: "";
  position: absolute;
  inset: 4px 3px;
  border-radius: 6px;
}
.alert::before { background: #eaaeab; }
.current::before {
  right: 8px;
  background: #f8f8f8;
  box-shadow: 0 0 0 1px #e2e2e2, 4px 0 0 #eeeeee, 5px 0 0 #dddddd;
}
.stacked::before { right: 7px; box-shadow: 1px 0 0 #f3dedd, 4px 0 0 #eaaeab; }
.current::after { left: 16px; width: 16px; background: #527c80; }
.alert::after { left: 9px; width: 30px; background: #c42b1c; }
.stacked::after { left: 12px; width: 24px; }
.app-dot {
  position: absolute;
  top: 16px;
  right: 9px;
  width: 6px;
  height: 6px;
  border-radius: 50%;
  background: #4d7f80;
}
.overflow {
  margin-left: 4px;
  padding: 0 2px;
  border: solid #738688;
  border-width: 0 2px;
}
.tray {
  display: flex;
  align-items: flex-start;
  margin-left: auto;
  padding-right: 29px;
  line-height: 24px;
}
.tray button { min-width: 47px; height: 68px; }
.tray .lang { width: 58px; margin-left: 6px; font-size: 17px; text-align: center; }
.tray .status { width: 128px; gap: 12px; }
.tray .clock { width: 102px; justify-content: flex-end; font-size: 17px; text-align: right; }
```
